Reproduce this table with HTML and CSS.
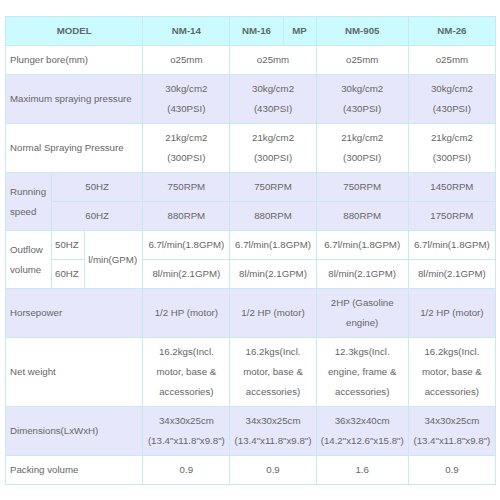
FILE: index.html
```html
<!DOCTYPE html>
<html>
<head>
<meta charset="utf-8">
<link rel="stylesheet" href="styles.css">
</head>
<body>
<div class="wrap">
<table class="spec">
  <colgroup>
    <col class="c1"><col class="c2"><col class="c3"><col class="c4"><col class="c5"><col class="c6"><col class="c7"><col class="c8">
  </colgroup>
  <tr class="head">
    <th colspan="3">MODEL</th>
    <th>NM-14</th>
    <th>NM-16</th>
    <th>MP</th>
    <th>NM-905</th>
    <th>NM-26</th>
  </tr>
  <tr>
    <td colspan="3" class="lbl">Plunger bore(mm)</td>
    <td>o25mm</td>
    <td colspan="2">o25mm</td>
    <td>o25mm</td>
    <td>o25mm</td>
  </tr>
  <tr class="alt">
    <td colspan="3" class="lbl">Maximum spraying pressure</td>
    <td>30kg/cm2<br>(430PSI)</td>
    <td colspan="2">30kg/cm2<br>(430PSI)</td>
    <td>30kg/cm2<br>(430PSI)</td>
    <td>30kg/cm2<br>(430PSI)</td>
  </tr>
  <tr>
    <td colspan="3" class="lbl">Normal Spraying Pressure</td>
    <td>21kg/cm2<br>(300PSI)</td>
    <td colspan="2">21kg/cm2<br>(300PSI)</td>
    <td>21kg/cm2<br>(300PSI)</td>
    <td>21kg/cm2<br>(300PSI)</td>
  </tr>
  <tr class="alt">
    <td rowspan="2" class="lbl">Running speed</td>
    <td colspan="2">50HZ</td>
    <td>750RPM</td>
    <td colspan="2">750RPM</td>
    <td>750RPM</td>
    <td>1450RPM</td>
  </tr>
  <tr class="alt">
    <td colspan="2">60HZ</td>
    <td>880RPM</td>
    <td colspan="2">880RPM</td>
    <td>880RPM</td>
    <td>1750RPM</td>
  </tr>
  <tr>
    <td rowspan="2" class="lbl">Outflow volume</td>
    <td class="lbl hz">50HZ</td>
    <td rowspan="2" class="lbl unit">l/min(GPM)</td>
    <td>6.7l/min(1.8GPM)</td>
    <td colspan="2">6.7l/min(1.8GPM)</td>
    <td>6.7l/min(1.8GPM)</td>
    <td>6.7l/min(1.8GPM)</td>
  </tr>
  <tr>
    <td class="lbl hz">60HZ</td>
    <td>8l/min(2.1GPM)</td>
    <td colspan="2">8l/min(2.1GPM)</td>
    <td>8l/min(2.1GPM)</td>
    <td>8l/min(2.1GPM)</td>
  </tr>
  <tr class="alt">
    <td colspan="3" class="lbl">Horsepower</td>
    <td>1/2 HP (motor)</td>
    <td colspan="2">1/2 HP (motor)</td>
    <td>2HP (Gasoline<br>engine)</td>
    <td>1/2 HP (motor)</td>
  </tr>
  <tr>
    <td colspan="3" class="lbl">Net weight</td>
    <td>16.2kgs(Incl.<br>motor, base &amp;<br>accessories)</td>
    <td colspan="2">16.2kgs(Incl.<br>motor, base &amp;<br>accessories)</td>
    <td>12.3kgs(Incl.<br>engine, frame &amp;<br>accessories)</td>
    <td>16.2kgs(Incl.<br>motor, base &amp;<br>accessories)</td>
  </tr>
  <tr class="alt">
    <td colspan="3" class="lbl">Dimensions(LxWxH)</td>
    <td>34x30x25cm<br>(13.4"x11.8"x9.8")</td>
    <td colspan="2">34x30x25cm<br>(13.4"x11.8"x9.8")</td>
    <td>36x32x40cm<br>(14.2"x12.6"x15.8")</td>
    <td>34x30x25cm<br>(13.4"x11.8"x9.8")</td>
  </tr>
  <tr>
    <td colspan="3" class="lbl">Packing volume</td>
    <td>0.9</td>
    <td colspan="2">0.9</td>
    <td>1.6</td>
    <td>0.9</td>
  </tr>
</table>
</div>
</body>
</html>
```
FILE: styles.css
```css
html, body {
  margin: 0;
  padding: 0;
  background: #ffffff;
}
.wrap {
  padding: 16px 0 0 5px;
}
.spec {
  border-collapse: collapse;
  table-layout: fixed;
  width: 491px;
  font-family: "Liberation Sans", Arial, sans-serif;
  font-size: 9.7px;
  line-height: 20px;
  color: #666666;
}
.c1 { width: 46px; }
.c2 { width: 33px; }
.c3 { width: 58px; }
.c4 { width: 87px; }
.c5 { width: 53px; }
.c6 { width: 33px; }
.c7 { width: 92px; }
.c8 { width: 87px; }
.spec th,
.spec td {
  border: 1px solid #c6eaee;
  padding: 4px 2px;
  text-align: center;
  vertical-align: middle;
  white-space: nowrap;
}
.spec th {
  background: #ccfbff;
  color: #5b6b6b;
  font-weight: bold;
}
.spec tr.alt td {
  background: #e7e7fb;
}
.spec td.lbl {
  text-align: left;
  padding-left: 4px;
  white-space: normal;
}
.spec td.hz {
  padding-left: 3px;
}
.spec td.unit {
  padding-left: 3px;
}
```
